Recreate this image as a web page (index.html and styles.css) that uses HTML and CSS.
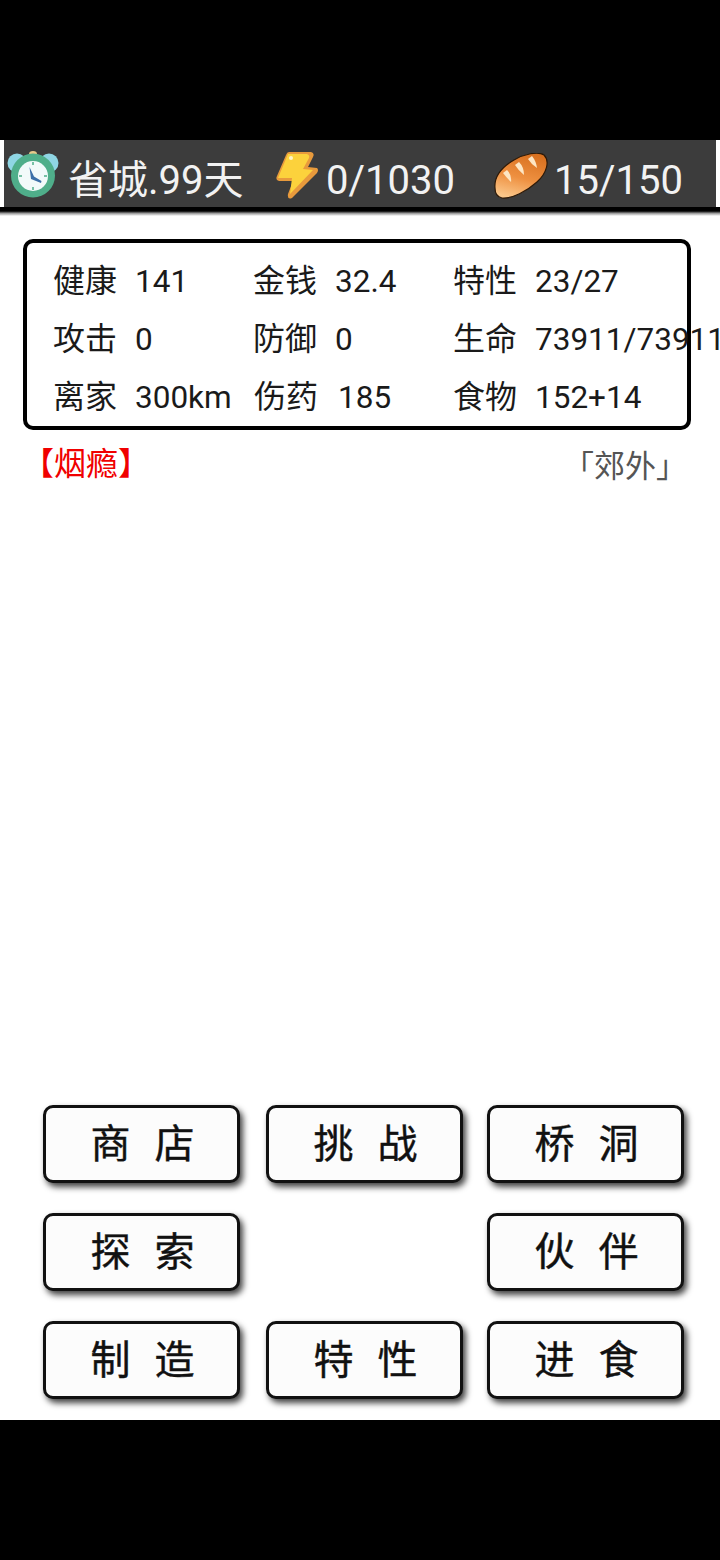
FILE: index.html
```html
<!DOCTYPE html>
<html lang="zh-CN">
<head>
    <meta charset="UTF-8">
    <meta name="viewport" content="width=device-width, initial-scale=1.0">
    <title>省城</title>
    <link rel="stylesheet" href="styles.css">
</head>
<body>
    <div class="screen">
        <div class="status-bar">
            <div class="status-item item-day">
                <svg class="icon icon-clock" viewBox="0 0 54 48">
                    <ellipse cx="27" cy="4" rx="4" ry="3" fill="#e8c98a"/>
                    <circle cx="11" cy="13" r="9.5" fill="#8fd6e4"/>
                    <circle cx="43" cy="13" r="9.5" fill="#8fd6e4"/>
                    <circle cx="27" cy="25.5" r="22" fill="#4fae8a"/>
                    <circle cx="27" cy="26" r="15" fill="#f2fafa"/>
                    <path d="M27 12 v3 M27 37 v3 M13 26 h3 M38 26 h3" stroke="#4fae8a" stroke-width="1.5"/>
                    <path d="M23.5 17 L25 29 L35 33 L35.5 31 L28 26.5 Z" fill="#3c6fa8"/>
                </svg>
                <span>省城.99天</span>
            </div>
            <div class="status-item item-energy">
                <svg class="icon icon-bolt" viewBox="0 0 44 48">
                    <path d="M14 1 L36 1 Q40 2 38 6 L33 16 L42 17 Q44 19 42 22 L17 47 Q12 49 13 43 L18 30 L4 30 Q0 29 2 25 L11 4 Q12 1 14 1 Z" fill="#e89a3c"/>
                    <path d="M13 3 L32 3 Q35 4 34 7 L28 18 L38 19 L15 43 L17 27 L3 27 Z" fill="#fcd23c"/>
                    <circle cx="16" cy="7" r="2" fill="#fff6c8"/>
                </svg>
                <span>0/1030</span>
            </div>
            <div class="status-item item-food">
                <svg class="icon icon-bread" viewBox="0 0 54 46">
                    <defs>
                        <linearGradient id="crust" x1="0.65" y1="0" x2="0.35" y2="1">
                            <stop offset="0" stop-color="#d8701f"/>
                            <stop offset="0.55" stop-color="#ee9040"/>
                            <stop offset="1" stop-color="#fbc78a"/>
                        </linearGradient>
                    </defs>
                    <path d="M1 35 C0 24 8 14 20 7 C30 1 44 -2 50 2 C56 8 53 20 43 29 C33 38 18 46 8 45 C3 44 1 40 1 35 Z" fill="url(#crust)" stroke="#2e1a08" stroke-width="1.2"/>
                    <path d="M13 17 Q18 22 17 29 Q12 24 9 20 Z" fill="#fde6c4"/>
                    <path d="M25 9 Q30 14 30 22 Q24 17 21 12 Z" fill="#fde6c4"/>
                    <path d="M38 3 Q42 8 43 15 Q37 11 34 6 Z" fill="#fde6c4"/>
                </svg>
                <span>15/150</span>
            </div>
        </div>

        <div class="stats-card">
            <div class="stat"><span class="stat-label">健康</span><span class="stat-value">141</span></div>
            <div class="stat"><span class="stat-label">金钱</span><span class="stat-value">32.4</span></div>
            <div class="stat"><span class="stat-label">特性</span><span class="stat-value">23/27</span></div>
            <div class="stat"><span class="stat-label">攻击</span><span class="stat-value">0</span></div>
            <div class="stat"><span class="stat-label">防御</span><span class="stat-value">0</span></div>
            <div class="stat"><span class="stat-label">生命</span><span class="stat-value">73911/73911</span></div>
            <div class="stat"><span class="stat-label">离家</span><span class="stat-value">300km</span></div>
            <div class="stat stat-wide"><span class="stat-label">伤药</span><span class="stat-value">185</span></div>
            <div class="stat"><span class="stat-label">食物</span><span class="stat-value">152+14</span></div>
        </div>

        <div class="info-row">
            <span class="debuff">【烟瘾】</span>
            <span class="location">「郊外」</span>
        </div>

        <div class="actions">
            <button class="action">商 店</button>
            <button class="action">挑 战</button>
            <button class="action">桥 洞</button>
            <button class="action">探 索</button>
            <span></span>
            <button class="action">伙 伴</button>
            <button class="action">制 造</button>
            <button class="action">特 性</button>
            <button class="action">进 食</button>
        </div>
    </div>
</body>
</html>
```

FILE: styles.css
```css
html, body {
    margin: 0;
    height: 1560px;
    overflow: hidden;
    background-color: #000;
}
body {
    padding-top: 140px;
    box-sizing: border-box;
    font-family: Roboto, "Noto Sans CJK SC", sans-serif;
}
.screen {
    height: 1280px;
    background-color: #fff;
    display: flex;
    flex-direction: column;
    overflow: hidden;
}
.status-bar {
    height: 67px;
    margin: 0 4px;
    background-color: #3c3c3c;
    display: flex;
    align-items: center;
    color: #f2f2f2;
    font-size: 40px;
    position: relative;
}
.status-bar::after {
    content: "";
    position: absolute;
    left: -4px;
    right: -4px;
    top: 67px;
    height: 9px;
    background: linear-gradient(#000 0, #000 45%, #999 70%, #fff 100%);
}
.status-item {
    display: flex;
    align-items: center;
}
.status-item span {
    line-height: 67px;
    padding-top: 14px;
}
.icon {
    flex: none;
}
.item-day {
    width: 271px;
    padding-left: 2px;
    box-sizing: border-box;
}
.icon-clock {
    width: 54px;
    height: 48px;
    margin-right: 8px;
}
.item-energy {
    width: 219px;
}
.icon-bolt {
    width: 44px;
    height: 48px;
    margin-right: 7px;
    margin-top: 2px;
}
.icon-bread {
    width: 54px;
    height: 46px;
    margin-right: 6px;
    margin-top: 4px;
}
.stats-card {
    margin: 32px 29px 0 23px;
    height: 191px;
    box-sizing: border-box;
    border: 4px solid #000;
    border-radius: 10px;
    padding: 7px 0 0 26px;
    display: grid;
    grid-template-columns: repeat(3, 200px);
    grid-auto-rows: 58px;
    color: #1a1a1a;
    white-space: nowrap;
}
.stat {
    display: flex;
    align-items: center;
    font-size: 32px;
}
.stat-label {
    width: 82px;
    flex: none;
    margin-top: -2px;
}
.stat-value {
    padding-top: 4px;
    font-size: 31.5px;
}
.stat-wide .stat-label {
    width: 84px;
    margin-left: 1px;
}
.info-row {
    display: flex;
    justify-content: space-between;
    padding: 12px 33px 0 22px;
    font-size: 32px;
    line-height: 44px;
}
.debuff {
    color: #f00000;
}
.location {
    color: #555;
    font-size: 31px;
    padding-top: 3px;
}
.actions {
    margin-top: auto;
    padding: 0 36px 21px 43px;
    display: grid;
    grid-template-columns: 198px 196px 197px;
    grid-auto-rows: 78px;
    column-gap: 25px;
    row-gap: 30px;
}
.action {
    padding: 0 0 6px 2px;
    border: 3px solid #111;
    border-radius: 10px;
    background-color: #fcfcfc;
    color: #111;
    font-family: "Noto Sans CJK SC", sans-serif;
    font-size: 40px;
    word-spacing: 15px;
    -webkit-text-stroke: 0.4px #111;
    box-shadow: 3px 4px 6px rgba(0,0,0,0.75);
}
.action:nth-child(3n+1) {
    width: 197px;
}
.action:nth-child(3n+2) {
    width: 197px;
}
```
